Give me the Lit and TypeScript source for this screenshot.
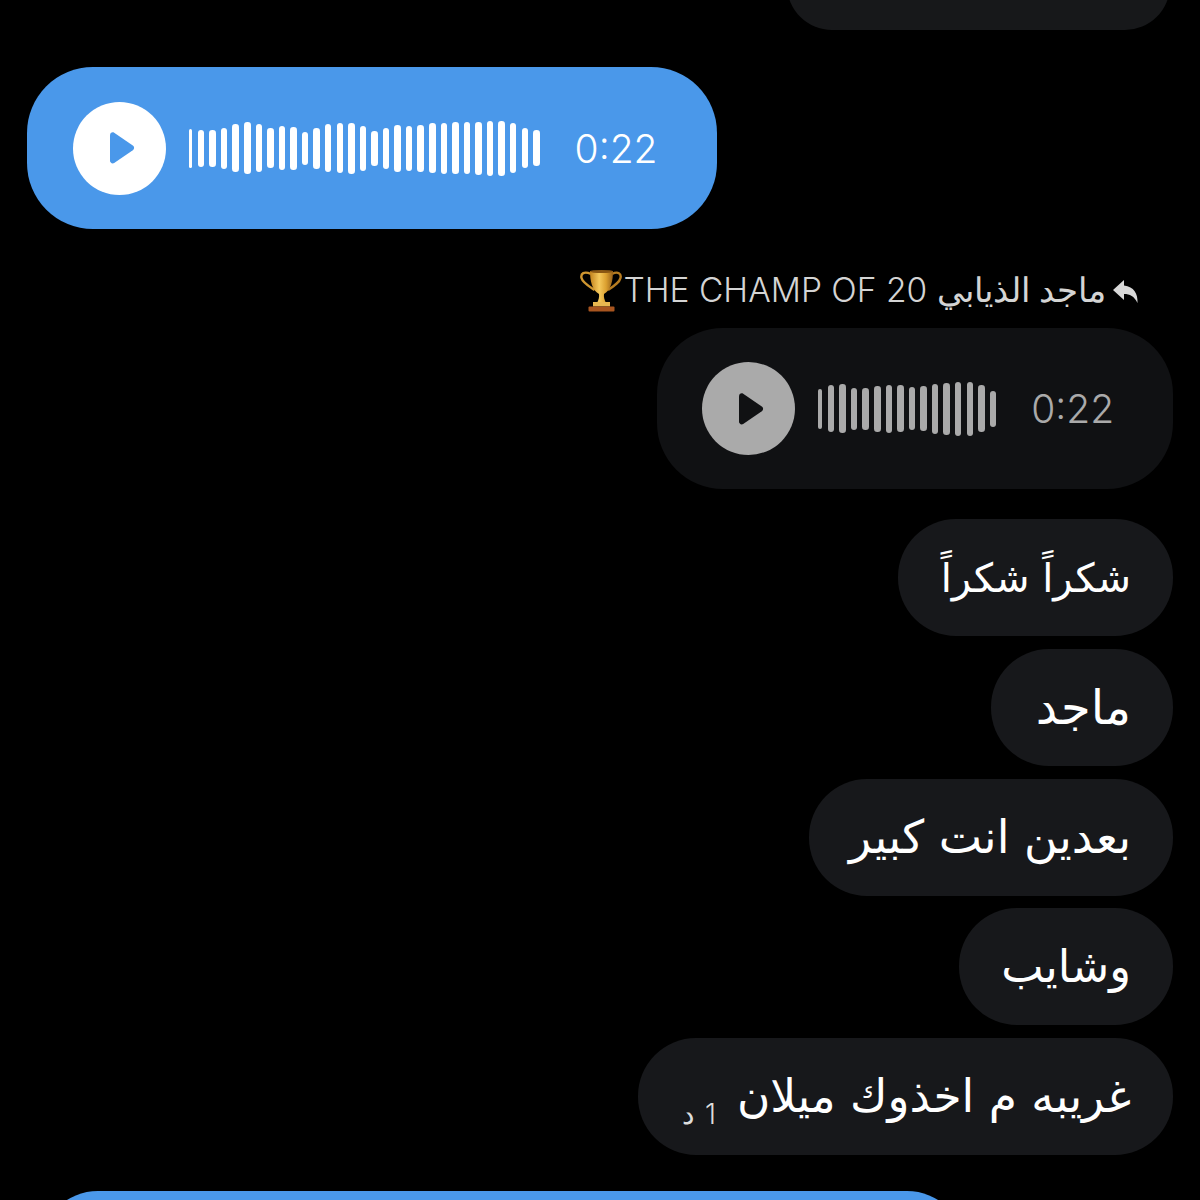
import { LitElement, html, css, svg } from "lit";
import { customElement } from "lit/decorators.js";

const BLUE_BARS = [39,37,37,41,48,52,48,40,44,43,33,41,48,50,51,45,35,41,47,45,47,50,51,52,52,53,55,55,50,40,36];
const GRAY_BARS = [40,47,49,42,42,46,48,47,43,45,50,52,54,54,47,36];
const TEXTS = [
  { text: "شكراً شكراً", size: 40, width: 275 },
  { text: "ماجد", size: 48, width: 182 },
  { text: "بعدين انت كبير", size: 46, width: 364 },
  { text: "وشايب", size: 45, width: 214 },
];

const playIcon = svg`<path d="M3 3.2C3 .9 5.3-.4 7.2.8l18.6 12.6c1.7 1.2 1.7 3.6 0 4.8L7.2 31c-1.900 1.200-4.200-.1-4.200-2.400z"/>`;

const trophy = html`<svg class="trophy" viewBox="0 0 42 44" aria-hidden="true">
  <defs>
    <linearGradient id="gold" x1="0" x2="1" y1="0" y2="0">
      <stop offset="0" stop-color="#c2821c"/><stop offset=".4" stop-color="#f5c95c"/>
      <stop offset=".7" stop-color="#dba030"/><stop offset="1" stop-color="#96601a"/>
    </linearGradient>
  </defs>
  <path d="M11 6C4 3 .5 5.500 1.500 10c1 4.500 7 8 13 12" fill="none" stroke="#cf9630" stroke-width="2.400"/>
  <path d="M32 6c6-3 9.500-.5 8.500 4-1 4.500-6.500 8-12.500 12" fill="none" stroke="#b67c20" stroke-width="2.400"/>
  <path d="M10 3h23c0 10-2 19-9 23-.5 3 .5 6 2 9H17c1.500-3 2.500-6 2-9C12 22 10 13 10 3z" fill="url(#gold)"/>
  <ellipse cx="21.500" cy="3.500" rx="11.500" ry="1.600" fill="#8a5713"/>
  <rect x="13" y="34" width="17" height="4.500" fill="#e8b850"/>
  <rect x="8.500" y="38.500" width="26" height="5" rx="1" fill="#a8551f"/>
</svg>`;

@customElement("app-root")
export class AppRoot extends LitElement {
  static styles = css`
    :host {
      display: block;
      width: 1200px;
      height: 1200px;
      overflow: hidden;
      background: #000;
      font-family: Inter, "Liberation Sans", sans-serif;
    }
    .thread {
      display: flex;
      flex-direction: column;
      align-items: flex-end;
      padding: 0 27px;
    }
    .peek {
      width: 383px;
      height: 90px;
      margin: -60px 3px 37px 0;
      border-radius: 58px;
      background: #17181a;
    }
    .voice {
      display: flex;
      align-items: center;
      box-sizing: border-box;
      height: 162px;
      border-radius: 66px;
    }
    .voice.mine {
      align-self: flex-start;
      width: 690px;
      padding-left: 46px;
      background: #4a98ea;
      color: #fff;
      margin-bottom: 37px;
    }
    .voice.theirs {
      width: 516px;
      height: 161px;
      padding-left: 45px;
      background: #101113;
      color: #aaa;
      margin-bottom: 30px;
    }
    .play {
      flex: none;
      display: flex;
      align-items: center;
      justify-content: center;
      width: 93px;
      height: 93px;
      border-radius: 50%;
      background: currentColor;
    }
    .play svg { width: 28px; height: 32px; margin-left: 3px; }
    .mine .play svg { fill: #4a98ea; }
    .theirs .play svg { fill: #101113; }
    .bars { display: flex; align-items: center; margin-left: 23px; }
    .bars span {
      flex: none;
      width: 6.500px;
      margin-right: 5.070px;
      border-radius: 3.250px;
      background: currentColor;
    }
    .bars span:first-child { width: 3px; margin-right: 5.750px; }
    .theirs .bars span:first-child { width: 4px; }
    .bars span:last-child { margin-right: 0; }
    .time {
      font-size: 39px;
      font-weight: 300;
      line-height: 1;
      margin-left: 35px;
      white-space: nowrap;
    }
    .reply {
      display: flex;
      align-items: center;
      direction: rtl;
      gap: 7px;
      height: 47px;
      margin: 0 35px 15px 0;
      color: #d4d4d4;
      font-family: Inter, "DejaVu Sans", sans-serif;
      font-size: 33.500px;
      font-weight: 300;
      white-space: nowrap;
    }
    .arrow { flex: none; width: 25px; height: 23px; margin-top: 3px; fill: #d8d8d8; }
    .trophy {
      width: 42px;
      height: 44px;
      margin-right: 2px;
      vertical-align: -10.500px;
    }
    .bubble {
      display: flex;
      align-items: center;
      direction: rtl;
      box-sizing: border-box;
      height: 117px;
      margin-bottom: 12.750px;
      padding: 0 42px;
      border-radius: 58px;
      background: #17181b;
      color: #fff;
      font-family: "DejaVu Sans", sans-serif;
      white-space: nowrap;
    }
    .bubble.last { width: 535px; font-size: 45.500px; }
    .stamp {
      font-family: Inter, "DejaVu Sans", sans-serif;
      font-size: 28px;
      font-weight: 300;
      line-height: 28px;
      word-spacing: 3px;
      color: #ddd;
      margin-right: 21px;
      align-self: flex-end;
      padding-bottom: 27px;
    }
    .next {
      align-self: flex-start;
      width: 925px;
      height: 117px;
      margin: 23.250px 0 0 13px;
      border-radius: 58px;
      background: #4a98ea;
    }
  `;

  private voice(kind: string, bars: number[]) {
    return html`<div class="voice ${kind}">
      <div class="play"><svg viewBox="0 0 28 32">${playIcon}</svg></div>
      <div class="bars">${bars.map((h) => html`<span style="height:${h}px"></span>`)}</div>
      <div class="time">0:22</div>
    </div>`;
  }

  render() {
    return html`<div class="thread">
      <div class="peek"></div>
      ${this.voice("mine", BLUE_BARS)}
      <div class="reply">
        <svg class="arrow" viewBox="0 0 25 23"><path d="M11 0 0 10l11 10v-6c6 0 10 2 13.500 9C25 14 21 6.500 11 5.500z"/></svg>
        <span>ماجد الذيابي THE CHAMP OF 20${trophy}</span>
      </div>
      ${this.voice("theirs", GRAY_BARS)}
      ${TEXTS.map((t) => html`<div class="bubble" style="width:${t.width}px;font-size:${t.size}px">${t.text}</div>`)}
      <div class="bubble last">غريبه م اخذوك ميلان<span class="stamp">1 د</span></div>
      <div class="next"></div>
    </div>`;
  }
}
